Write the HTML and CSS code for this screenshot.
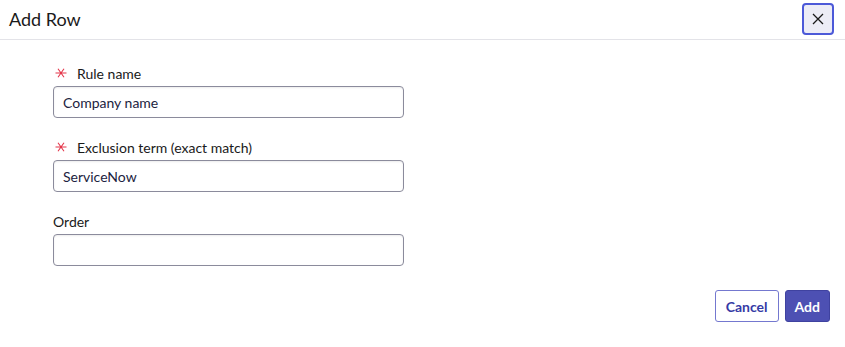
FILE: index.html
```html
<!DOCTYPE html>
<html lang="en">
<head>
    <meta charset="UTF-8">
    <meta name="viewport" content="width=device-width, initial-scale=1.0">
    <title>Add Row</title>
    <link rel="stylesheet" href="styles.css">
</head>
<body>
    <div class="modal">
        <div class="modal-header">
            <h2>Add Row</h2>
            <button class="close-btn" type="button" aria-label="Close">
                <svg width="12" height="12" viewBox="0 0 12 12"><path d="M1 1L11 11M11 1L1 11" stroke="#1a1a1a" stroke-width="1.3" fill="none"/></svg>
            </button>
        </div>
        <form class="modal-body" id="addRowForm">
            <div class="form-group">
                <label for="rule-name">
                    <svg class="required" width="12" height="12" viewBox="0 0 12 12"><path d="M0.5 6H11.5M3 1.7L9 10.3M9 1.7L3 10.3" stroke="#e4364a" stroke-width="1.1" fill="none"/></svg>
                    Rule name
                </label>
                <input type="text" id="rule-name" value="Company name">
            </div>
            <div class="form-group">
                <label for="term">
                    <svg class="required" width="12" height="12" viewBox="0 0 12 12"><path d="M0.5 6H11.5M3 1.7L9 10.3M9 1.7L3 10.3" stroke="#e4364a" stroke-width="1.1" fill="none"/></svg>
                    Exclusion term (exact match)
                </label>
                <input type="text" id="term" value="ServiceNow">
            </div>
            <div class="form-group">
                <label for="order">Order</label>
                <input type="text" id="order">
            </div>
            <div class="modal-footer">
                <button type="button" class="btn btn-secondary">Cancel</button>
                <button type="submit" class="btn btn-primary">Add</button>
            </div>
        </form>
    </div>
</body>
</html>
```

FILE: styles.css
```css
body {
    margin: 0;
    font-family: Lato, "Open Sans", sans-serif;
    background-color: #fff;
    color: #1a1a1a;
}
.modal {
    width: 845px;
    height: 347px;
}
.modal-header {
    display: flex;
    justify-content: space-between;
    align-items: center;
    height: 40px;
    padding: 0 11px 0 9px;
    border-bottom: 1.5px solid #e3e3e8;
    box-sizing: border-box;
}
.modal-header h2 {
    margin: 0 0 2px;
    font-size: 18px;
    font-weight: 400;
}
.close-btn {
    width: 32px;
    height: 32px;
    margin-top: -1px;
    padding: 0;
    display: flex;
    align-items: center;
    justify-content: center;
    background-color: #ececf6;
    border: 2px solid #4c59d8;
    border-radius: 4px;
    cursor: pointer;
}
.modal-body {
    padding: 23px 0 0 53px;
}
.form-group {
    margin-bottom: 19px;
}
.form-group label {
    display: flex;
    align-items: center;
    height: 20px;
    margin-bottom: 3px;
    font-size: 14px;
}
.required {
    margin: 0 10px 0 2px;
}
.form-group input {
    width: 351px;
    height: 32px;
    padding: 0 9px;
    border: 1px solid #8b8b9c;
    border-radius: 4px;
    box-sizing: border-box;
    font-family: inherit;
    font-size: 14px;
    color: #1c2340;
    box-shadow: inset 0 1px 2px rgba(0, 0, 0, 0.08);
}
.form-group input:focus {
    outline: none;
}
.modal-footer {
    display: flex;
    justify-content: flex-end;
    gap: 6px;
    padding-right: 15px;
    margin-top: 24px;
}
.btn {
    height: 32px;
    padding: 0 10px;
    border-radius: 3px;
    font-family: inherit;
    font-size: 14px;
    font-weight: 700;
    cursor: pointer;
}
.btn-secondary {
    background-color: #fff;
    border: 1px solid #7478cf;
    color: #353ba5;
}
.btn-primary {
    padding: 0 9px;
    background-color: #4d50b3;
    border: 1px solid #3f42a0;
    color: #fff;
}
```
